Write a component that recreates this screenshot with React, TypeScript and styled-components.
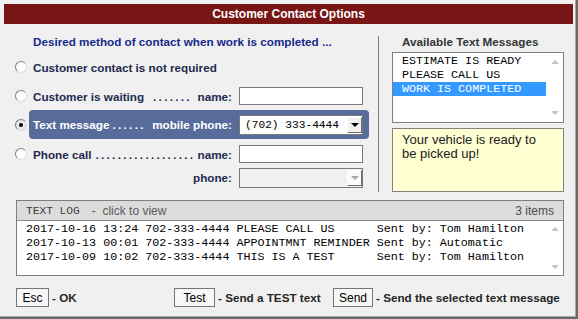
import React from "react";
import styled, { createGlobalStyle } from "styled-components";

const GlobalStyle = createGlobalStyle`
  html, body {
    margin: 0;
    padding: 0;
    background: #f0f0f0;
  }
  body {
    font-family: "Liberation Sans", Arial, sans-serif;
  }
  * {
    box-sizing: border-box;
  }
`;

const SANS = `"Liberation Sans", Arial, sans-serif`;
const MONO = `"Liberation Mono", "Courier New", monospace`;

const messages = ["ESTIMATE IS READY", "PLEASE CALL US", "WORK IS COMPLETED"];

const logLines = [
  "2017-10-16 13:24 702-333-4444 PLEASE CALL US      Sent by: Tom Hamilton",
  "2017-10-13 00:01 702-333-4444 APPOINTMNT REMINDER Sent by: Automatic",
  "2017-10-09 10:02 702-333-4444 THIS IS A TEST      Sent by: Tom Hamilton",
];

export default function App() {
  return (
    <>
      <GlobalStyle />
      <Window>
        <Frame>
          <TitleBar>Customer Contact Options</TitleBar>

          <Top>
            <LeftPane>
              <PaneTitle $color="#172a8c" $indent={29}>
                Desired method of contact when work is completed ...
              </PaneTitle>

              <Rows>
                <Row $top={8} $height={18}>
                  <Radio />
                  <Field>
                    <Label>
                      <span>Customer contact is not required</span>
                    </Label>
                  </Field>
                </Row>

                <Row $top={11} $height={18}>
                  <Radio />
                  <Field>
                    <Label>
                      <span>
                        Customer is waiting<Dots $gap={9}>.......</Dots>
                      </span>
                      <span>name:</span>
                    </Label>
                    <TextBox />
                  </Field>
                </Row>

                <Row $top={5} $height={29}>
                  <Radio $checked />
                  <Field $active>
                    <Label $light>
                      <span>
                        Text message<Dots $gap={3}>......</Dots>
                      </span>
                      <span>mobile phone:</span>
                    </Label>
                    <Combo>
                      <ComboText>(702) 333-4444</ComboText>
                      <DropButton>
                        <Caret />
                      </DropButton>
                    </Combo>
                  </Field>
                </Row>

                <Row $top={6} $height={18}>
                  <Radio />
                  <Field>
                    <Label>
                      <span>
                        Phone call<Dots $gap={4}>..................</Dots>
                      </span>
                      <span>name:</span>
                    </Label>
                    <TextBox />
                  </Field>
                </Row>

                <Row $top={5} $height={19}>
                  <Radio $hidden />
                  <Field>
                    <Label>
                      <span />
                      <span>phone:</span>
                    </Label>
                    <Combo $disabled>
                      <ComboText />
                      <DropButton $disabled>
                        <Caret $disabled />
                      </DropButton>
                    </Combo>
                  </Field>
                </Row>
              </Rows>
            </LeftPane>

            <Divider />

            <RightPane>
              <PaneTitle $color="#353535" $indent={10}>
                Available Text Messages
              </PaneTitle>
              <ListBox>
                <ListItems>
                  {messages.map((m, i) => (
                    <ListItem key={m} $selected={i === 2}>
                      {m}
                    </ListItem>
                  ))}
                </ListItems>
                <ScrollStrip $pad={7}>
                  <Arrow $up />
                  <Arrow />
                </ScrollStrip>
              </ListBox>
              <Note>
                <NoteText>Your vehicle is ready to be picked up!</NoteText>
              </Note>
            </RightPane>
          </Top>

          <LogBox>
            <LogHeader>
              <LogTitle>
                <LogName>TEXT LOG</LogName>
                <LogHint>-&nbsp;&nbsp;click to view</LogHint>
              </LogTitle>
              <LogCount>3 items</LogCount>
            </LogHeader>
            <LogBody>
              <LogLines>
                {logLines.map((l) => (
                  <LogLine key={l}>{l}</LogLine>
                ))}
              </LogLines>
              <ScrollStrip $pad={6}>
                <Arrow $up />
                <Arrow />
              </ScrollStrip>
            </LogBody>
          </LogBox>

          <Footer>
            <Action>
              <Button $width={33}>Esc</Button>
              <Hint>- OK</Hint>
            </Action>
            <Action>
              <Button $width={41}>Test</Button>
              <Hint>- Send a TEST text</Hint>
            </Action>
            <Action>
              <Button $width={40}>Send</Button>
              <Hint>- Send the selected text message</Hint>
            </Action>
          </Footer>
        </Frame>
      </Window>
    </>
  );
}

const Window = styled.div`
  width: 578px;
  height: 319px;
  background: #f0f0f0;
  border-right: 2px solid #686868;
  border-bottom: 2px solid #686868;
`;

const Frame = styled.div`
  height: 100%;
  display: flex;
  flex-direction: column;
  padding: 4px 2px 0 4px;
  border-right: 1px solid #a8a8a8;
  border-bottom: 1px solid #a8a8a8;
`;

const TitleBar = styled.div`
  height: 20px;
  flex: none;
  display: flex;
  align-items: center;
  justify-content: center;
  background: #781515;
  color: #ffffff;
  font-family: ${SANS};
  font-weight: bold;
  font-size: 12px;
`;

const Top = styled.div`
  display: flex;
  height: 168px;
  flex: none;
`;

const LeftPane = styled.div`
  width: 374px;
  padding-top: 10px;
`;

const Divider = styled.div`
  width: 1px;
  margin-top: 12px;
  background: #7e7e7e;
`;

const RightPane = styled.div`
  flex: 1;
  padding: 10px 9px 0 13px;
  display: flex;
  flex-direction: column;
`;

const PaneTitle = styled.div<{ $color: string; $indent: number }>`
  height: 16px;
  line-height: 16px;
  padding-left: ${({ $indent }) => $indent}px;
  color: ${({ $color }) => $color};
  font-family: ${SANS};
  font-weight: bold;
  font-size: 11.7px;
  white-space: nowrap;
`;

const Rows = styled.div`
  padding-left: 11px;
  display: flex;
  flex-direction: column;
`;

const Row = styled.div<{ $top: number; $height: number }>`
  display: flex;
  align-items: center;
  margin-top: ${({ $top }) => $top}px;
  height: ${({ $height }) => $height}px;
`;

const Radio = styled.span<{ $checked?: boolean; $hidden?: boolean }>`
  position: relative;
  flex: none;
  width: 12px;
  height: 12px;
  margin-right: 2px;
  border-radius: 50%;
  border: 1px solid;
  border-color: #7f7f7f #dcdcdc #dcdcdc #7f7f7f;
  background: ${({ $checked }) => ($checked ? "#e8e8e8" : "#ffffff")};
  visibility: ${({ $hidden }) => ($hidden ? "hidden" : "visible")};

  &::after {
    content: "";
    display: ${({ $checked }) => ($checked ? "block" : "none")};
    position: absolute;
    left: 3px;
    top: 3px;
    width: 4px;
    height: 4px;
    border-radius: 50%;
    background: #000000;
  }
`;

const Field = styled.div<{ $active?: boolean }>`
  display: flex;
  align-items: center;
  width: 340px;
  height: 100%;
  padding: 0 6px 0 4px;
  border-radius: 4px;
  background: ${({ $active }) => ($active ? "#586c9c" : "transparent")};
`;

const Label = styled.div<{ $light?: boolean }>`
  width: 199px;
  margin-right: 7px;
  display: flex;
  justify-content: space-between;
  color: ${({ $light }) => ($light ? "#ffffff" : "#1f2a4f")};
  font-family: ${SANS};
  font-weight: bold;
  font-size: 11.7px;
  white-space: nowrap;
`;

const Dots = styled.span<{ $gap: number }>`
  margin-left: ${({ $gap }) => $gap}px;
  letter-spacing: 2.3px;
`;

const TextBox = styled.div`
  width: 124px;
  height: 18px;
  background: #ffffff;
  border: 1px solid #7a7a7a;
`;

const Combo = styled.div<{ $disabled?: boolean }>`
  width: 124px;
  height: 20px;
  display: flex;
  align-items: stretch;
  border: 1px solid #7a7a7a;
  background: ${({ $disabled }) => ($disabled ? "#f0f0f0" : "#ffffff")};
`;

const ComboText = styled.span`
  flex: 1;
  padding-left: 5px;
  line-height: 18px;
  font-family: ${MONO};
  font-size: 11.2px;
  color: #000000;
  white-space: pre;
`;

const DropButton = styled.span<{ $disabled?: boolean }>`
  width: 15px;
  margin: 1px 0 1px 0;
  display: flex;
  align-items: center;
  justify-content: center;
  background: ${({ $disabled }) => ($disabled ? "#fafafa" : "#f0f0f0")};
  border-left: 1px solid #ffffff;
  border-top: 1px solid #ffffff;
  border-right: 1px solid #6e6e6e;
  border-bottom: 1px solid #6e6e6e;
`;

const Caret = styled.span<{ $disabled?: boolean }>`
  width: 0;
  height: 0;
  border-left: 4px solid transparent;
  border-right: 4px solid transparent;
  border-top: 4px solid ${({ $disabled }) => ($disabled ? "#a8a8a8" : "#000000")};
`;

const ListBox = styled.div`
  margin-top: 2px;
  height: 71px;
  display: flex;
  background: #ffffff;
  border: 1px solid #808080;
`;

const ListItems = styled.div`
  flex: 1;
  padding-top: 1px;
`;

const ListItem = styled.div<{ $selected?: boolean }>`
  height: 14px;
  line-height: 14px;
  padding-left: 9px;
  font-family: ${MONO};
  font-size: 11.7px;
  white-space: pre;
  background: ${({ $selected }) => ($selected ? "#3399ff" : "transparent")};
  color: ${({ $selected }) => ($selected ? "#ffffff" : "#000000")};
`;

const ScrollStrip = styled.div<{ $pad: number }>`
  width: 17px;
  flex: none;
  display: flex;
  flex-direction: column;
  justify-content: space-between;
  align-items: center;
  padding: ${({ $pad }) => $pad}px 0;
`;

const Arrow = styled.span<{ $up?: boolean }>`
  width: 0;
  height: 0;
  border-left: 4px solid transparent;
  border-right: 4px solid transparent;
  ${({ $up }) =>
    $up ? "border-bottom: 4px solid #c4c4c4;" : "border-top: 4px solid #c4c4c4;"}
`;

const Note = styled.div`
  margin-top: 5px;
  height: 64px;
  padding: 4px 9px;
  background: #ffffd2;
  border: 1px solid #828282;
`;

const NoteText = styled.div`
  max-width: 142px;
  font-family: ${SANS};
  font-size: 13px;
  line-height: 14px;
  color: #1a1a24;
`;

const LogBox = styled.div`
  margin: 8px 0 0 12px;
  width: 548px;
  height: 76px;
  flex: none;
  display: flex;
  flex-direction: column;
  border: 1px solid #7f7f7f;
`;

const LogHeader = styled.div`
  height: 20px;
  flex: none;
  display: flex;
  align-items: center;
  justify-content: space-between;
  padding: 0 9px;
  background: #dcdcdc;
  border-bottom: 1px solid #8a8a8a;
`;

const LogTitle = styled.div`
  display: flex;
  align-items: center;
  white-space: nowrap;
`;

const LogName = styled.span`
  font-family: ${MONO};
  font-size: 11.2px;
  color: #3c3c3c;
`;

const LogHint = styled.span`
  margin-left: 12px;
  font-family: ${SANS};
  font-size: 12px;
  color: #5a5a5a;
`;

const LogCount = styled.span`
  font-family: ${SANS};
  font-size: 12px;
  color: #4a4a4a;
`;

const LogBody = styled.div`
  flex: 1;
  display: flex;
  background: #ffffff;
`;

const LogLines = styled.div`
  flex: 1;
  padding-left: 9px;
  padding-top: 1px;
`;

const LogLine = styled.div`
  height: 14px;
  line-height: 14px;
  font-family: ${MONO};
  font-size: 11.7px;
  color: #000000;
  white-space: pre;
`;

const Footer = styled.div`
  margin-top: 12px;
  padding-left: 12px;
  display: grid;
  grid-template-columns: 158px 159px auto;
  align-items: center;
`;

const Action = styled.div`
  display: flex;
  align-items: center;
`;

const Button = styled.span<{ $width: number }>`
  width: ${({ $width }) => $width}px;
  height: 19px;
  display: flex;
  align-items: center;
  justify-content: center;
  background: #f7f7f7;
  border: 1px solid #757575;
  font-family: ${SANS};
  font-size: 12px;
  color: #000000;
`;

const Hint = styled.span`
  margin-left: 3px;
  font-family: ${SANS};
  font-weight: bold;
  font-size: 11.7px;
  color: #262626;
  white-space: nowrap;
`;
